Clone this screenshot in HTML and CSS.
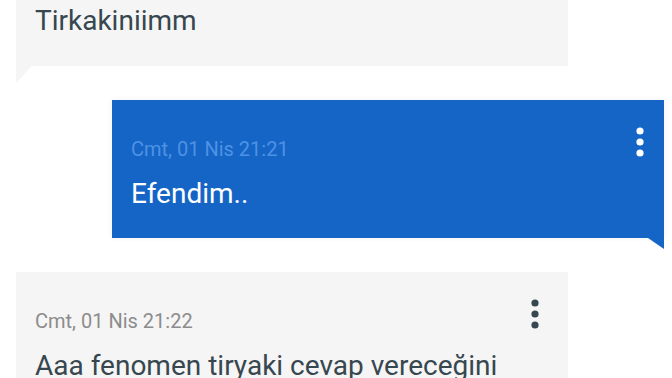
FILE: index.html
```html
<!DOCTYPE html>
<html>
	<head>
		<meta charset="UTF-8">
		<title>Mesajlar</title>
		<link rel="stylesheet" href="styles.css">
	</head>
	<body>
		<div class="chat">
			<div class="msg msg-in msg-cut">
				<div class="text">Tirkakiniimm</div>
			</div>

			<div class="msg msg-out">
				<div class="head">
					<span class="time">Cmt, 01 Nis 21:21</span>
					<svg class="more" width="8" height="30" viewBox="0 0 8 30">
						<circle cx="4" cy="4" r="3.6"/>
						<circle cx="4" cy="15" r="3.6"/>
						<circle cx="4" cy="26" r="3.6"/>
					</svg>
				</div>
				<div class="text">Efendim..</div>
			</div>

			<div class="msg msg-in">
				<div class="head">
					<span class="time">Cmt, 01 Nis 21:22</span>
					<svg class="more" width="8" height="30" viewBox="0 0 8 30">
						<circle cx="4" cy="4" r="3.6"/>
						<circle cx="4" cy="15" r="3.6"/>
						<circle cx="4" cy="26" r="3.6"/>
					</svg>
				</div>
				<div class="text">Aaa fenomen tiryaki cevap vereceğini</div>
			</div>
		</div>
	</body>
</html>
```

FILE: styles.css
```css
* {
	box-sizing: border-box;
}

body {
	margin: 0;
	background-color: #fff;
	font-family: Roboto, "Noto Sans", sans-serif;
	overflow: hidden;
}

.chat {
	display: flex;
	flex-direction: column;
	gap: 34px;
}

.msg {
	position: relative;
	padding: 27px 24px 26px 19px;
}

.msg-in {
	background-color: #f5f5f5;
	margin: 0 104px 0 16px;
	color: #37474f;
}

.msg-cut {
	padding-top: 3px;
	padding-bottom: 27px;
}

/* kuyruk sol alt */
.msg-cut::after {
	content: "";
	position: absolute;
	left: 0;
	top: 100%;
	width: 0;
	height: 0;
	border-top: 17px solid #f5f5f5;
	border-right: 16px solid transparent;
}

.msg-out {
	background-color: #1565c6;
	margin: 0 8px 0 112px;
	color: #fff;
	padding-right: 20px;
	box-shadow: 0 0 6px rgba(0, 0, 0, 0.06);
}

/* kuyruk sag alt */
.msg-out::after {
	content: "";
	position: absolute;
	right: 0;
	top: 100%;
	width: 0;
	height: 0;
	border-top: 11px solid #1565c6;
	border-left: 16px solid transparent;
}

.head {
	display: flex;
	justify-content: space-between;
	align-items: flex-start;
}

.time {
	margin-top: 10px;
	font-size: 20px;
	line-height: 24px;
	color: #8c8c8c;
}

.msg-out .time {
	color: #4e92e4;
}

.more {
	display: block;
	fill: #37474f;
}

.msg-in .more {
	margin-right: 5px;
}

.msg-out .more {
	fill: #fff;
}

.text {
	margin-top: 15px;
	font-size: 28px;
	line-height: 36px;
	white-space: nowrap;
}

.msg-cut .text {
	margin-top: 0;
}
```
